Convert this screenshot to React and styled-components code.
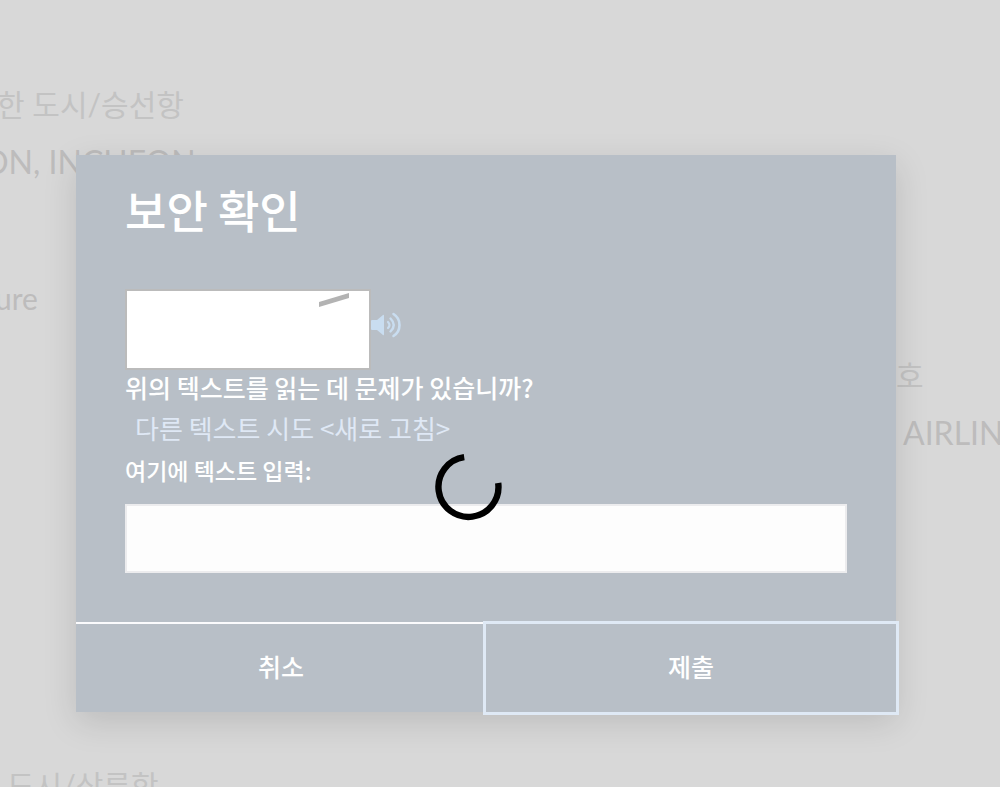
import React from "react";
import styled, { createGlobalStyle } from "styled-components";

const Global = createGlobalStyle`
  *, *::before, *::after { box-sizing: border-box; }
  body {
    margin: 0;
    background: #d8d8d8;
    font-family: Lato, "Noto Sans CJK KR", sans-serif;
    color: #fff;
    overflow: hidden;
  }
  #root { display: grid; }
`;

const Page = styled.main`
  grid-area: 1 / 1;
  display: flex;
  justify-content: space-between;
  height: 100vh;
  overflow: hidden;
`;

const Column = styled.dl`
  margin: 0;
  padding-top: ${(p) => p.$top}px;
  width: ${(p) => p.$width}px;
  white-space: nowrap;
`;

const Term = styled.dt`
  margin-left: ${(p) => p.$start || 0}px;
  font-size: 30px;
  line-height: 54px;
  padding-bottom: 3px;
  color: #c3c3c3;
`;

const Value = styled.dd`
  margin: 0 0 ${(p) => p.$after || 0}px ${(p) => p.$start || 0}px;
  font-size: ${(p) => p.$size || 32}px;
  line-height: 56px;
  color: #bdbcbc;
`;

const Dialog = styled.section`
  grid-area: 1 / 1;
  position: relative;
  align-self: start;
  margin: 155px 104px 0 76px;
  background: #b8bfc7;
  box-shadow: 0 10px 32px rgba(0, 0, 0, 0.13);
  font-family: "Noto Sans CJK KR", sans-serif;
  font-weight: 500;
`;

const Body = styled.div`
  padding: 24px 49px 49px;
`;

const Title = styled.h1`
  margin: 0 0 48px;
  font-size: 45px;
  font-weight: 500;
  line-height: 62px;
`;

const Challenge = styled.div`
  display: flex;
  align-items: center;
`;

const Captcha = styled.div`
  width: 246px;
  height: 81px;
  border: 2px solid #bbb;
  background: #fff;
`;

const AudioButton = styled.button`
  display: flex;
  padding: 0;
  border: 0;
  margin-bottom: 10px;
  background: none;
  cursor: pointer;
`;

const Question = styled.p`
  margin: 0;
  font-size: 25px;
  line-height: 34px;
`;

const Refresh = styled.a`
  display: block;
  margin-left: 10px;
  font-size: 26px;
  font-weight: 400;
  line-height: 48px;
  color: #dfe8f5;
  text-decoration: none;
`;

const Label = styled.label`
  display: block;
  margin-bottom: 16px;
  font-size: 23px;
  line-height: 36px;
`;

const Field = styled.input`
  display: block;
  width: 100%;
  height: 69px;
  padding: 0 18px;
  border: 2px solid #ececee;
  border-radius: 0;
  background: #fdfdfd;
  font: inherit;
  font-size: 25px;
  color: #333;
  outline: none;
`;

const Footer = styled.footer`
  display: grid;
  grid-template-columns: 1fr 1fr;
  border-top: 2px solid #fbfbfd;
`;

const Action = styled.button`
  height: 88px;
  padding: 0 0 4px;
  border: 0;
  background: #b8bfc7;
  font: inherit;
  font-size: 25px;
  color: #fff;
  cursor: pointer;
  outline: ${(p) => (p.$active ? "3px solid #dfe9f5" : "none")};
`;

const Spinner = styled.svg`
  position: absolute;
  left: calc(50% - 51px);
  top: 298px;
`;

export default function App() {
  return (
    <>
      <Global />
      <Page aria-hidden="true">
        <Column $top={77} $width={240}>
          <Term $start={-3}>한 도시/승선항</Term>
          <Value $start={-17} $after={80}>ON, INCHEON</Value>
          <Value $start={-5} $size={30} $after={432}>ure</Value>
          <Term $start={7}>도시/상륙항</Term>
        </Column>
        <Column $top={348} $width={104}>
          <Term>호</Term>
          <Value $start={7}>AIRLINES</Value>
        </Column>
      </Page>
      <Dialog role="dialog" aria-labelledby="title">
        <Body>
          <Title id="title">보안 확인</Title>
          <Challenge>
            <Captcha>
              <svg width="242" height="77" aria-hidden="true">
                <path d="M192 11 L222 2 V7 L192 16 Z" fill="#b3b3b3" />
              </svg>
            </Captcha>
            <AudioButton type="button" aria-label="audio">
              <svg width="32" height="26" viewBox="0 0 32 26" fill="none" stroke="#c9ddf0" strokeLinecap="round">
                <path d="M0 9 Q0 8 1 8 H6 L12 3 Q13 2 13 4 V22 Q13 24 12 23 L6 18 H1 Q0 18 0 17 Z" fill="#c9ddf0" stroke="none" />
                <path d="M17 10 Q20 13 17 16" strokeWidth="2.2" />
                <path d="M19.5 6.5 Q26 13 19.5 19.5" strokeWidth="2.4" />
                <path d="M22.5 2 C30.5 7 30.5 19 22.5 24" strokeWidth="2.6" />
              </svg>
            </AudioButton>
          </Challenge>
          <Question>위의 텍스트를 읽는 데 문제가 있습니까?</Question>
          <Refresh href="#refresh">다른 텍스트 시도 &lt;새로 고침&gt;</Refresh>
          <Label htmlFor="answer">여기에 텍스트 입력:</Label>
          <Field id="answer" type="text" />
        </Body>
        <Footer>
          <Action type="button">취소</Action>
          <Action type="submit" $active>제출</Action>
        </Footer>
        <Spinner width="68" height="68" viewBox="0 0 68 68" fill="none" role="status" aria-label="loading">
          <path d="M29.2 4.2 A30 30 0 1 0 63.2 30" stroke="#000" strokeWidth="6.4" />
        </Spinner>
      </Dialog>
    </>
  );
}
